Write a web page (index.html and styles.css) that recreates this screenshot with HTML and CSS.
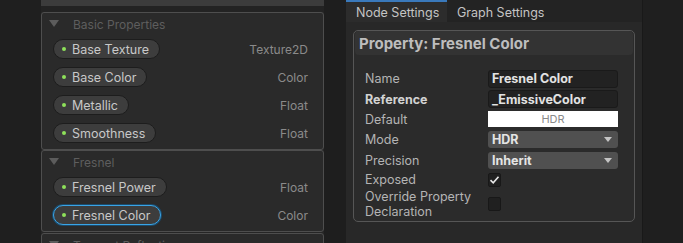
FILE: index.html
```html
<!DOCTYPE html>
<html>
<head>
<meta charset="utf-8">
<link rel="stylesheet" href="styles.css">
</head>
<body>
<div class="gutter"></div>
<div class="left">
  <div class="topbar"></div>
  <div class="topgap"></div>
  <div class="section s1">
    <div class="sec-head"><span class="tri"></span><span class="sec-title">Basic Properties</span></div>
    <div class="row"><div class="pill"><span class="dot"></span>Base Texture</div><span class="type">Texture2D</span></div>
    <div class="row"><div class="pill"><span class="dot"></span>Base Color</div><span class="type">Color</span></div>
    <div class="row"><div class="pill"><span class="dot"></span>Metallic</div><span class="type">Float</span></div>
    <div class="row"><div class="pill"><span class="dot"></span>Smoothness</div><span class="type">Float</span></div>
  </div>
  <div class="section s2">
    <div class="sec-head"><span class="tri"></span><span class="sec-title">Fresnel</span></div>
    <div class="row"><div class="pill"><span class="dot"></span>Fresnel Power</div><span class="type">Float</span></div>
    <div class="row"><div class="pill selected"><span class="dot"></span>Fresnel Color</div><span class="type">Color</span></div>
  </div>
  <div class="section s3">
    <div class="sec-head"><span class="tri"></span><span class="sec-title">Tangent Reflection</span></div>
  </div>
</div>
<div class="mid"></div>
<div class="right">
  <div class="tabs">
    <div class="tab active">Node Settings</div>
    <div class="tab">Graph Settings</div>
  </div>
  <div class="body">
    <div class="prop">
      <div class="prop-head">Property: Fresnel Color</div>
      <div class="fields">
        <div class="frow r-name"><span class="lbl">Name</span><div class="input">Fresnel Color</div></div>
        <div class="frow r-ref"><span class="lbl bold">Reference</span><div class="input">_EmissiveColor</div></div>
        <div class="frow r-def"><span class="lbl">Default</span><div class="color">HDR</div></div>
        <div class="frow r-mode"><span class="lbl">Mode</span><div class="drop">HDR<span class="arrow"></span></div></div>
        <div class="frow r-prec"><span class="lbl">Precision</span><div class="drop">Inherit<span class="arrow"></span></div></div>
        <div class="frow r-exp"><span class="lbl">Exposed</span><div class="check"><svg width="11" height="10" viewBox="0 0 11 10"><path d="M1.5 5.2 L4.2 7.8 L9.5 1.8" fill="none" stroke="#e8e8e8" stroke-width="1.6"/></svg></div></div>
        <div class="frow r-ovr"><span class="lbl two">Override Property<br>Declaration</span><div class="check"></div></div>
      </div>
    </div>
  </div>
</div>
</body>
</html>
```

FILE: styles.css
```css
html, body {
  margin: 0;
  padding: 0;
}
body {
  width: 683px;
  height: 243px;
  overflow: hidden;
  background: #1f1f1f;
  display: flex;
  align-items: flex-start;
  font-family: Inter, "Noto Sans", sans-serif;
  font-size: 12.5px;
}
.gutter {
  width: 41px;
  flex: none;
  height: 243px;
}
.left {
  width: 283px;
  flex: none;
  height: 243px;
  overflow: hidden;
  background: #262626;
  display: flex;
  flex-direction: column;
}
.topbar {
  height: 6px;
  background: #3c3c3c;
  flex: none;
}
.topgap {
  height: 6px;
  background: #232323;
  flex: none;
}
.section {
  flex: none;
  border: 1px solid #4e4e4e;
  border-radius: 3px;
  background: #2a2a2a;
  box-sizing: border-box;
}
.s1 { height: 138px; padding-bottom: 2px; }
.s2 { height: 82px; padding-bottom: 2px; }
.s3 { height: 20px; margin-top: 1px; }
.sec-head {
  height: 22px;
  display: flex;
  align-items: center;
}
.tri {
  width: 0;
  height: 0;
  margin-left: 7px;
  border-left: 5.5px solid transparent;
  border-right: 5.5px solid transparent;
  border-top: 7px solid #5c5c5c;
  margin-top: -2px;
}
.sec-title {
  margin-left: 14px;
  color: #5e5e5e;
  font-size: 12px;
  white-space: nowrap;
}
.row {
  height: 28px;
  display: flex;
  align-items: center;
  justify-content: space-between;
  padding-left: 11px;
  padding-right: 15px;
}
.pill {
  height: 20px;
  box-sizing: border-box;
  background: #3d3d3d;
  border: 1px solid #1d1d1d;
  border-radius: 10px;
  color: #c8c8c8;
  display: flex;
  align-items: center;
  padding: 0 10px 0 8px;
  font-size: 12.5px;
}
.pill.selected {
  border: 1px solid #3aa4e6;
  box-shadow: 0 0 0 1px #1b4a6a;
}
.dot {
  width: 4px;
  height: 4px;
  border-radius: 50%;
  background: #8ee25a;
  margin-right: 6px;
}
.type {
  color: #8a8a8a;
  font-size: 12px;
}
.mid {
  width: 22px;
  flex: none;
  height: 243px;
  background: #1e1e1e;
}
.right {
  width: 296px;
  flex: none;
  height: 243px;
  background: #282828;
  border-right: 1px solid #191919;
  display: flex;
  flex-direction: column;
}
.tabs {
  height: 22px;
  background: #232323;
  display: flex;
  flex: none;
}
.tab {
  height: 22px;
  box-sizing: border-box;
  color: #c4c4c4;
  font-size: 12.5px;
  white-space: nowrap;
  display: flex;
  align-items: center;
  padding: 2px 10px 0 10px;
}
.tab.active {
  width: 101px;
  background: #2c2c2c;
  border-top: 2px solid #3a79bb;
  padding: 0 0 0 10px;
}
.body {
  padding: 8px 7px 0 7px;
}
.prop {
  border: 1px solid #565656;
  border-radius: 5px;
  background: #2b2b2b;
  height: 192px;
  box-sizing: border-box;
  padding: 0 1px;
}
.prop-head {
  height: 24px;
  background: #333333;
  border-radius: 4px;
  color: #bdbdbd;
  font-weight: 700;
  font-size: 15px;
  display: flex;
  align-items: center;
  padding-left: 4px;
}
.fields {
  padding-top: 13px;
}
.frow {
  display: flex;
  align-items: center;
  padding-left: 10px;
}
.r-name { height: 21px; }
.r-ref { height: 20px; }
.r-def { height: 20px; }
.r-mode { height: 21px; }
.r-prec { height: 21px; }
.r-exp { height: 17px; }
.r-ovr { height: 32px; }
.lbl {
  width: 123px;
  flex: none;
  color: #b4b4b4;
  font-size: 12.5px;
}
.lbl.bold {
  font-weight: 700;
  color: #d2d2d2;
}
.lbl.two {
  line-height: 15px;
}
.input {
  width: 130px;
  height: 18px;
  box-sizing: border-box;
  background: #222222;
  border: 1px solid #1a1a1a;
  border-radius: 3px;
  color: #e2e2e2;
  font-weight: 700;
  font-size: 12.5px;
  display: flex;
  align-items: center;
  padding-left: 3px;
}
.color {
  width: 130px;
  height: 16px;
  background: #ffffff;
  color: #8a8a8a;
  font-size: 11px;
  display: flex;
  align-items: center;
  justify-content: center;
}
.drop {
  width: 130px;
  height: 17px;
  box-sizing: border-box;
  background: #505050;
  border-radius: 3px;
  color: #e4e4e4;
  font-weight: 700;
  font-size: 12.5px;
  display: flex;
  align-items: center;
  justify-content: space-between;
  padding: 0 6px 0 4px;
}
.arrow {
  width: 0;
  height: 0;
  border-left: 4px solid transparent;
  border-right: 4px solid transparent;
  border-top: 5px solid #c4c4c4;
}
.check {
  width: 13px;
  height: 14px;
  box-sizing: border-box;
  background: #202020;
  border: 1px solid #181818;
  border-radius: 2px;
  display: flex;
  align-items: center;
  justify-content: center;
}
```
